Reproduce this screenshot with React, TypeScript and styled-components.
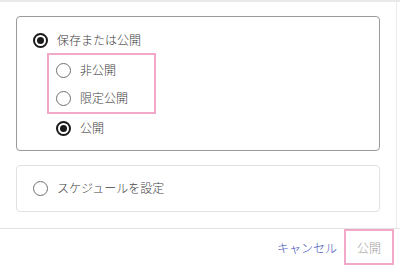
import styled, { createGlobalStyle } from 'styled-components';

const GlobalStyle = createGlobalStyle`
  html, body {
    margin: 0;
    padding: 0;
    background: #ffffff;
  }

  body {
    font-family: 'Noto Sans CJK JP', 'Noto Sans', sans-serif;
    color: #333333;
  }

  * {
    box-sizing: border-box;
  }
`;

const highlight = '#f2a9c9';

type Option = { key: string; label: string };

const hiddenOptions: Option[] = [
  { key: 'private', label: '非公開' },
  { key: 'unlisted', label: '限定公開' },
];

const Radio = ({ checked }: { checked?: boolean }) => (
  <RadioCircle $checked={checked}>{checked && <RadioDot />}</RadioCircle>
);

const App = () => {
  return (
    <>
      <GlobalStyle />
      <Dialog>
        <Body>
          <Main>
            <Card $active>
              <Row>
                <Radio checked />
                <Label>保存または公開</Label>
              </Row>
              <Highlight>
                {hiddenOptions.map((option) => (
                  <Row key={option.key}>
                    <Radio />
                    <Label>{option.label}</Label>
                  </Row>
                ))}
              </Highlight>
              <Row $indent>
                <Radio checked />
                <Label>公開</Label>
              </Row>
            </Card>
            <Card>
              <Row>
                <Radio />
                <Label>スケジュールを設定</Label>
              </Row>
            </Card>
          </Main>
          <ScrollTrack />
        </Body>
        <Footer>
          <CancelButton>キャンセル</CancelButton>
          <PublishButton disabled>公開</PublishButton>
        </Footer>
      </Dialog>
    </>
  );
};

export default App;

const Dialog = styled.div`
  display: flex;
  flex-direction: column;
  width: 400px;
  height: 266px;
  overflow: hidden;
  border-top: 2px solid #e9e9e9;
`;

const Body = styled.div`
  display: flex;
  border-bottom: 1px solid #e3e3e3;
`;

const Main = styled.div`
  flex: 1;
  display: flex;
  flex-direction: column;
  gap: 14px;
  padding: 14px 16px 16px 16px;
`;

const ScrollTrack = styled.div`
  width: 4px;
  border-left: 1px solid #ebebeb;
`;

const Card = styled.div<{ $active?: boolean }>`
  display: flex;
  flex-direction: column;
  padding: ${({ $active }) => ($active ? '9px 16px 8px' : '8px 16px 9px')};
  border: 1px solid ${({ $active }) => ($active ? '#9a9a9a' : '#e2e2e2')};
  border-radius: 4px;
`;

const Highlight = styled.div`
  display: flex;
  flex-direction: column;
  width: 109px;
  margin: -1px 0 0 14px;
  padding: 1px 0 0 7px;
  border: 2px solid ${highlight};
`;

const Row = styled.div<{ $indent?: boolean }>`
  display: flex;
  align-items: center;
  gap: 9px;
  height: 28px;
  margin-left: ${({ $indent }) => ($indent ? '23px' : '0')};
`;

const RadioCircle = styled.span<{ $checked?: boolean }>`
  display: flex;
  align-items: center;
  justify-content: center;
  flex-shrink: 0;
  width: 15px;
  height: 15px;
  border-radius: 50%;
  border: ${({ $checked }) =>
    $checked ? '2px solid #1a1a1a' : '1.5px solid #707070'};
`;

const RadioDot = styled.span`
  width: 7px;
  height: 7px;
  border-radius: 50%;
  background: #1a1a1a;
`;

const Label = styled.span`
  font-size: 12px;
  font-weight: 300;
  line-height: 1;
  color: #404040;
`;

const Footer = styled.div`
  flex: 1;
  display: flex;
  align-items: flex-start;
  justify-content: flex-end;
  padding-right: 6px;
`;

const FooterButton = styled.button`
  display: flex;
  align-items: center;
  justify-content: center;
  height: 36px;
  border: none;
  background: transparent;
  font-family: inherit;
  font-size: 12px;
  font-weight: 300;
  cursor: pointer;
`;

const CancelButton = styled(FooterButton)`
  padding: 0 7px;
  color: #3f51b5;
`;

const PublishButton = styled(FooterButton)`
  width: 50px;
  padding: 0;
  color: #a0a0a0;
  border: 2px solid ${highlight};
  cursor: default;
`;
